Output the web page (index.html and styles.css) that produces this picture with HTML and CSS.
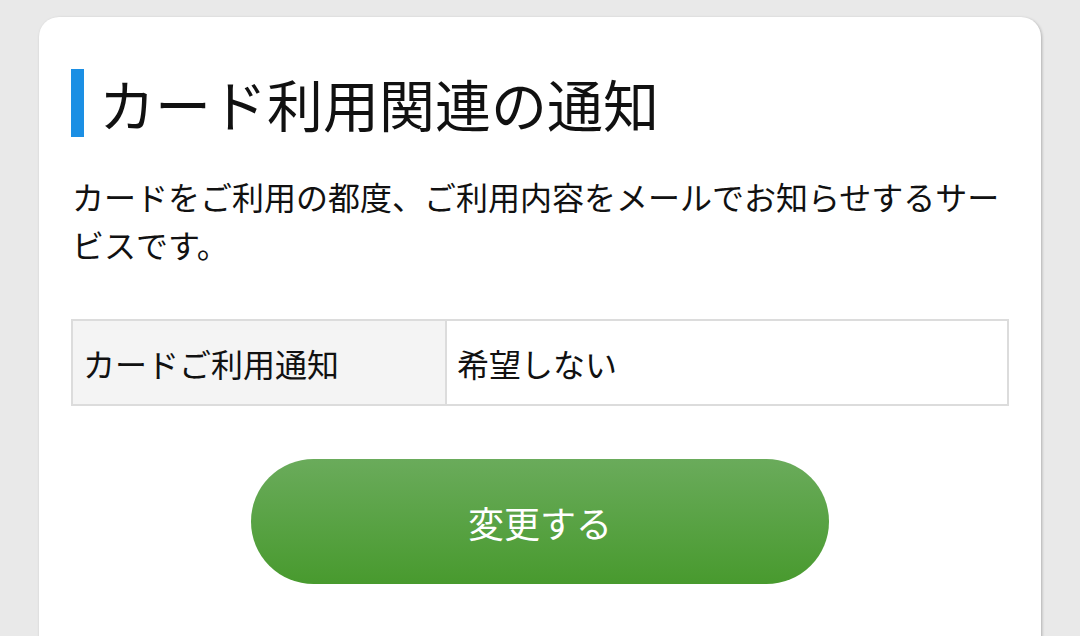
FILE: index.html
```html
<!DOCTYPE html>
<html>
    <head>
        <meta charset="UTF-8">
        <title>カード利用関連の通知</title>
        <link rel="stylesheet" href="styles.css">
    </head>
    <body>
        <div class="card">
            <h2 class="title">カード利用関連の通知</h2>
            <p class="lead">カードをご利用の都度、ご利用内容をメールでお知らせするサービスです。</p>
            <table class="info">
                <tr>
                    <th>カードご利用通知</th>
                    <td>希望しない</td>
                </tr>
            </table>
            <div class="actions">
                <button type="button" class="btn">変更する</button>
            </div>
        </div>
    </body>
</html>
```

FILE: styles.css
```css
html, body {
    margin: 0;
    padding: 0;
}
body {
    background: #e9e9e9;
    font-family: "Noto Sans CJK JP", "Noto Sans", sans-serif;
    color: #111;
    height: 636px;
    overflow: hidden;
}
.card {
    background: #fff;
    margin: 17px 39px 0 39px;
    padding: 52px 32px 40px 32px;
    border-radius: 20px;
    box-shadow: 1px 1px 3px rgba(0, 0, 0, 0.25);
    min-height: 600px;
}
.title {
    margin: 0;
    border-left: 13px solid #1b8fe4;
    padding-left: 15px;
    font-size: 56px;
    font-weight: normal;
    line-height: 68px;
    height: 68px;
}
.lead {
    margin: 35px 0 0 0;
    font-size: 32px;
    line-height: 48px;
    padding-left: 1px;
}
.info {
    margin-top: 51px;
    width: 100%;
    border-collapse: collapse;
    border: 2px solid #dcdcdc;
    font-size: 32px;
}
.info th, .info td {
    height: 83px;
    padding: 0 10px;
    text-align: left;
    font-weight: normal;
    border: 2px solid #dcdcdc;
}
.info th {
    width: 352px;
    background: #f4f4f4;
}
.actions {
    margin-top: 53px;
    display: flex;
    justify-content: center;
}
.btn {
    width: 578px;
    height: 125px;
    border: none;
    border-radius: 63px;
    background: linear-gradient(#6aab5b, #489a2e);
    color: #fff;
    font-family: "Noto Sans CJK JP", "Noto Sans", sans-serif;
    font-size: 36px;
    cursor: pointer;
}
```
